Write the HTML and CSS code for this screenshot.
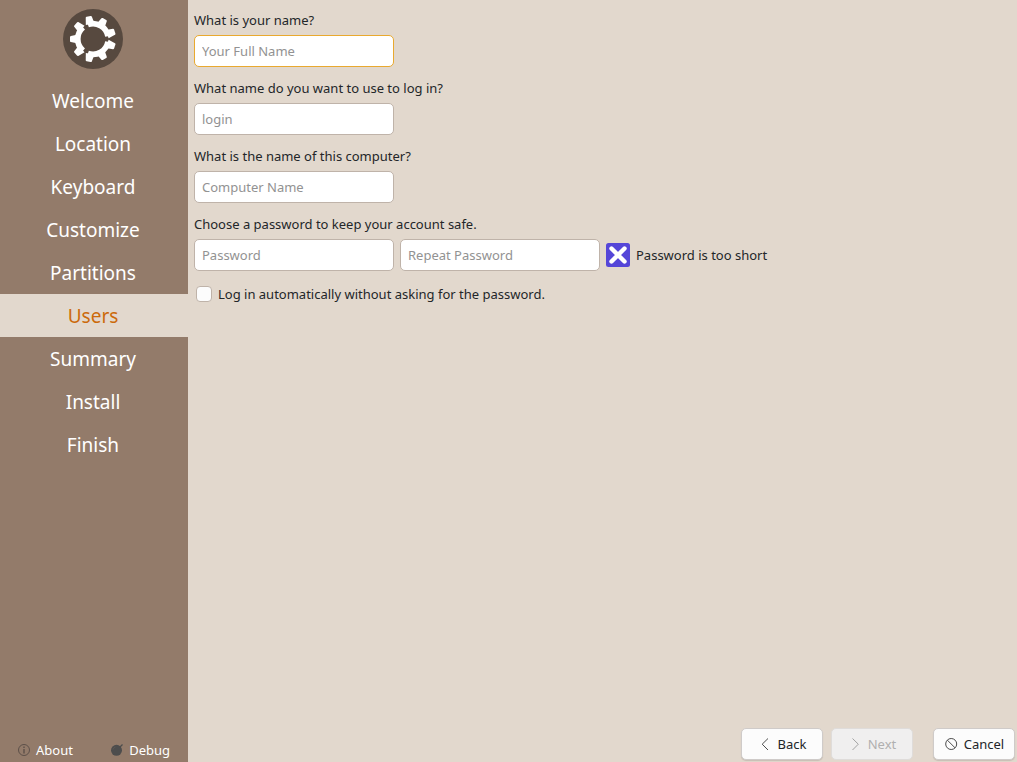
FILE: index.html
```html
<!DOCTYPE html>
<html lang="en">
<head>
<meta charset="UTF-8">
<meta name="viewport" content="width=device-width, initial-scale=1.0">
<title>Installer - Users</title>
<link rel="stylesheet" href="styles.css">
</head>
<body>
<div class="sidebar">
  <svg class="logo" width="60" height="60" viewBox="-30 -30 60 60" aria-hidden="true">
    <defs>
      <!-- a third of the gear: one arc with three teeth -->
      <g id="gear-part">
        <path d="M9.9 -11.6A15.25 15.25 0 0 1 9.9 11.6" fill="none" stroke="#fff" stroke-width="5.7"/>
        <path id="tooth" d="M15 -4.4L22.2 -3.1Q23 -2.9 23 -2V2Q23 2.9 22.2 3.1L15 4.4Z" fill="#fff"/>
        <use href="#tooth" transform="rotate(41)"/>
        <use href="#tooth" transform="rotate(-41)"/>
      </g>
    </defs>
    <circle r="30" fill="#57493f"/>
    <use href="#gear-part" transform="rotate(60)"/>
    <use href="#gear-part" transform="rotate(180)"/>
    <use href="#gear-part" transform="rotate(300)"/>
  </svg>
  <ul class="steps">
    <li>Welcome</li>
    <li>Location</li>
    <li>Keyboard</li>
    <li>Customize</li>
    <li>Partitions</li>
    <li class="current">Users</li>
    <li>Summary</li>
    <li>Install</li>
    <li>Finish</li>
  </ul>
  <div class="tools">
    <button type="button">
      <svg width="12" height="12" viewBox="0 0 12 12" fill="none" stroke="#5d5049"><circle cx="6" cy="6" r="5.5"/><path d="M6 2.5V4M6 5V9.5" stroke-width="1.4"/></svg>
      About
    </button>
    <button type="button">
      <svg width="12" height="12" viewBox="0 0 12 12"><circle cx="5.5" cy="6.3" r="5.5" fill="#4d4d4d"/><path d="M8.5 3.5L11.5 .5" stroke="#4d4d4d" stroke-width="1.2"/><path d="M2 5.5Q2.5 3.5 4.5 3" stroke="#5c5753" fill="none"/></svg>
      Debug
    </button>
  </div>
</div>

<form class="main">
  <div class="fields">
    <label for="fullname">What is your name?</label>
    <input class="box active" type="text" id="fullname" placeholder="Your Full Name">

    <label for="login">What name do you want to use to log in?</label>
    <input class="box" type="text" id="login" placeholder="login">

    <label for="hostname">What is the name of this computer?</label>
    <input class="box" type="text" id="hostname" placeholder="Computer Name">

    <label for="password">Choose a password to keep your account safe.</label>
    <div class="row">
      <input class="box" type="password" id="password" placeholder="Password">
      <input class="box" type="password" id="password2" placeholder="Repeat Password" aria-label="Repeat Password">
      <svg width="24" height="24" viewBox="0 0 24 24" aria-hidden="true"><rect width="24" height="24" rx="2.5" fill="#5546d8"/><path d="M5.5 5.5L18.5 18.5M18.5 5.5L5.5 18.5" stroke="#fff" stroke-width="4.4" stroke-linecap="round"/></svg>
      <span>Password is too short</span>
    </div>

    <label class="check"><input type="checkbox" name="autologin">Log in automatically without asking for the password.</label>
  </div>

  <div class="buttons">
    <button type="button">
      <svg width="16" height="16" viewBox="0 0 16 16" fill="none" stroke="#4d4d4d"><path d="M10 2.5L4.2 8.2L10 14"/></svg>
      Back
    </button>
    <button type="button" disabled>
      <svg width="16" height="16" viewBox="0 0 16 16" fill="none" stroke="#a3a3a3"><path d="M4.5 2.5L10.3 8.2L4.5 14"/></svg>
      Next
    </button>
    <button type="button" class="cancel">
      <svg width="16" height="16" viewBox="0 0 16 16" fill="none" stroke="#4d4d4d"><circle cx="7.2" cy="8" r="5.5"/><path d="M3.3 4.1L11.1 11.9"/></svg>
      Cancel
    </button>
  </div>
</form>
</body>
</html>
```
FILE: styles.css
```css
body {
  margin: 0;
  min-height: 100vh;
  display: flex;
  background-color: #e2d8cd;
  color: #232629;
  font-family: "Noto Sans", sans-serif;
  font-size: 13px;
  line-height: 18px;
}

button, input {
  font: inherit;
  color: inherit;
}

.sidebar {
  width: 188px;
  flex-shrink: 0;
  display: flex;
  flex-direction: column;
  background-color: #937b6a;
  color: #fff;
}

.logo {
  margin: 9px 63px 10px;
}

.steps {
  list-style: none;
  margin: 0;
  padding: 0;
}

.steps li {
  padding: 9px 2px 7px 0;
  font-size: 19px;
  line-height: 27px;
  text-align: center;
}

.steps .current {
  background-color: #e2d8cd;
  color: #cc6a0a;
}

.tools {
  margin-top: auto;
  display: flex;
  justify-content: space-between;
  padding: 0 18px 3px;
}

.tools button {
  display: flex;
  align-items: center;
  gap: 6px;
  padding: 0;
  border: none;
  background: none;
}

.main {
  flex: 1;
  display: flex;
  flex-direction: column;
  justify-content: space-between;
}

.fields {
  display: flex;
  flex-direction: column;
  align-items: flex-start;
  padding: 11px 6px;
}

.box {
  box-sizing: border-box;
  width: 200px;
  height: 32px;
  margin: 6px 0 12px;
  padding: 0 7px;
  border: 1px solid #bfb3a9;
  border-radius: 5px;
  background-color: #fff;
}

.box.active {
  border-color: #e9a92f;
}

.box::placeholder {
  color: #929292;
  opacity: 1;
}

.row {
  display: flex;
  align-items: center;
  gap: 6px;
  margin: 6px 0 12px;
}

.row .box {
  margin: 0;
}

.check {
  display: flex;
  align-items: center;
  gap: 6px;
  margin: 2px;
}

.check input {
  appearance: none;
  width: 16px;
  height: 16px;
  margin: 0;
  border: 1px solid #bfb3a9;
  border-radius: 4px;
  background-color: #fcfcfc;
}

.check input:checked {
  background-color: #cc6a0a;
}

.buttons {
  display: flex;
  justify-content: flex-end;
  gap: 8px;
  padding: 2px;
}

.buttons button {
  display: flex;
  align-items: center;
  justify-content: center;
  gap: 4px;
  box-sizing: border-box;
  width: 82px;
  height: 32px;
  padding: 0;
  border: 1px solid #cfcbc9;
  border-radius: 5px;
  background-color: #fcfcfc;
  box-shadow: 0 1px 1px rgba(0, 0, 0, 0.12);
}

.buttons button:disabled {
  border-color: #dfdcda;
  background-color: #f0efef;
  color: #b0b0b0;
  box-shadow: none;
}

.buttons .cancel {
  margin-left: 12px;
}
```
